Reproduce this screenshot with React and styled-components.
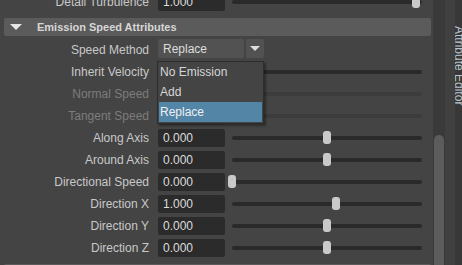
import styled, { createGlobalStyle } from "styled-components";

const GlobalStyle = createGlobalStyle`
  html, body {
    margin: 0;
    padding: 0;
    background: #444444;
    overflow: hidden;
  }
  body {
    font-family: "Liberation Sans", Arial, sans-serif;
    font-size: 12px;
  }
`;

// rows covered by the open menu keep their field but show no value
const rows = [
  { label: "Inherit Velocity", value: "", pct: 0 },
  { label: "Normal Speed", value: "", pct: 0, disabled: true },
  { label: "Tangent Speed", value: "", pct: 0, disabled: true },
  { label: "Along Axis", value: "0.000", pct: 0.5 },
  { label: "Around Axis", value: "0.000", pct: 0.5 },
  { label: "Directional Speed", value: "0.000", pct: 0 },
  { label: "Direction X", value: "1.000", pct: 0.545 },
  { label: "Direction Y", value: "0.000", pct: 0.5 },
  { label: "Direction Z", value: "0.000", pct: 0.5 },
];

const Slider = ({ pct, disabled }) => (
  <SliderBox>
    <Track $disabled={disabled} />
    {!disabled && <Handle style={{ left: `calc(${pct * 100}% - 4px)` }} />}
  </SliderBox>
);

export default function App() {
  return (
    <>
      <GlobalStyle />
      <Shell>
        <Main>
          <Content>
            <Row>
              <Label>Detail Turbulence</Label>
              <Field>1.000</Field>
              <Slider pct={0.968} />
            </Row>
            <Header>
              <Arrow />
              <HeaderTitle>Emission Speed Attributes</HeaderTitle>
            </Header>
            <Row>
              <Label>Speed Method</Label>
              <Dropdown>
                <SelectBox>Replace</SelectBox>
                <SelectButton>
                  <SmallArrow />
                </SelectButton>
                <Menu>
                  <MenuItem>No Emission</MenuItem>
                  <MenuItem>Add</MenuItem>
                  <MenuItem $active>Replace</MenuItem>
                </Menu>
              </Dropdown>
            </Row>
            {rows.map((r) => (
              <Row key={r.label}>
                <Label $disabled={r.disabled}>{r.label}</Label>
                <Field $disabled={r.disabled}>{r.value}</Field>
                <Slider pct={r.pct} disabled={r.disabled} />
              </Row>
            ))}
            <Header />
          </Content>
        </Main>
        <ScrollTrack>
          <Thumb />
        </ScrollTrack>
        <Spacer />
        <Tab>
          <TabText>Attribute Editor</TabText>
        </Tab>
      </Shell>
    </>
  );
}

const Shell = styled.div`
  display: flex;
  width: 462px;
  height: 265px;
  overflow: hidden;
`;

const Main = styled.div`
  width: 433px;
  flex-shrink: 0;
  overflow: hidden;
  background: #444444;
`;

const Content = styled.div`
  margin-top: -9px;
  display: flex;
  flex-direction: column;
`;

const Row = styled.div`
  display: flex;
  align-items: center;
  height: 22px;
`;

const Label = styled.div`
  width: 149px;
  margin-right: 9px;
  text-align: right;
  color: ${(p) => (p.$disabled ? "#7c7c7c" : "#c8c8c8")};
  white-space: nowrap;
`;

const Field = styled.div`
  width: 67px;
  height: 18px;
  box-sizing: border-box;
  padding-left: 5px;
  line-height: 19px;
  border-radius: 2px;
  background: ${(p) => (p.$disabled ? "#3e3e3e" : "#2b2b2b")};
  color: #dcdcdc;
`;

const SliderBox = styled.div`
  position: relative;
  flex: 1;
  height: 14px;
  margin: 0 11px 0 7px;
  display: flex;
  align-items: center;
`;

const Track = styled.div`
  width: 100%;
  height: 4px;
  border-radius: 2px;
  background: ${(p) => (p.$disabled ? "#3c3c3c" : "#2a2a2a")};
`;

const Handle = styled.div`
  position: absolute;
  top: 0;
  width: 8px;
  height: 13px;
  border-radius: 3px;
  background: #c9c9c9;
`;

const Header = styled.div`
  display: flex;
  align-items: center;
  height: 18px;
  margin: 5px 0 3px 4px;
  width: 427px;
  border-radius: 2px;
  background: #5b5b5b;
`;

const Arrow = styled.div`
  width: 0;
  height: 0;
  margin-left: 6px;
  border-left: 6px solid transparent;
  border-right: 6px solid transparent;
  border-top: 6px solid #e6e6e6;
`;

const HeaderTitle = styled.div`
  margin-left: 15px;
  font-size: 11px;
  font-weight: bold;
  color: #d6d6d6;
`;

const Dropdown = styled.div`
  position: relative;
  display: flex;
  height: 19px;
  margin-top: -3px;
`;

const SelectBox = styled.div`
  width: 86px;
  box-sizing: border-box;
  padding-left: 5px;
  line-height: 20px;
  background: #525252;
  border-radius: 2px;
  color: #dcdcdc;
`;

const SelectButton = styled.div`
  width: 18px;
  margin-left: 2px;
  background: #525252;
  border-radius: 2px;
  display: flex;
  align-items: center;
  justify-content: center;
`;

const SmallArrow = styled.div`
  width: 0;
  height: 0;
  border-left: 5px solid transparent;
  border-right: 5px solid transparent;
  border-top: 5px solid #dedede;
`;

const Menu = styled.div`
  position: absolute;
  left: -1px;
  top: 22px;
  width: 107px;
  box-sizing: border-box;
  padding: 0 1px 1px 1px;
  background: #444444;
  border: 1px solid #2d2d2d;
  box-shadow: 2px 2px 2px rgba(0, 0, 0, 0.35);
  z-index: 2;
`;

const MenuItem = styled.div`
  height: 20px;
  line-height: 20px;
  padding-left: 1px;
  color: ${(p) => (p.$active ? "#f0f0f0" : "#d6d6d6")};
  background: ${(p) => (p.$active ? "#5285a6" : "transparent")};
`;

const ScrollTrack = styled.div`
  width: 12px;
  flex-shrink: 0;
  background: #3a3a3a;
  display: flex;
  flex-direction: column;
  padding-top: 135px;
  box-sizing: border-box;
`;

const Thumb = styled.div`
  flex: 1;
  margin: 0 1px;
  border-radius: 5px 5px 0 0;
  background: #5c5c5c;
`;

const Spacer = styled.div`
  width: 10px;
  flex-shrink: 0;
  background: #404040;
`;

const Tab = styled.div`
  flex: 1;
  background: #383838;
  overflow: hidden;
  padding-top: 26px;
`;

const TabText = styled.div`
  writing-mode: vertical-rl;
  margin-left: -3px;
  color: #b8c4d0;
  white-space: nowrap;
`;
